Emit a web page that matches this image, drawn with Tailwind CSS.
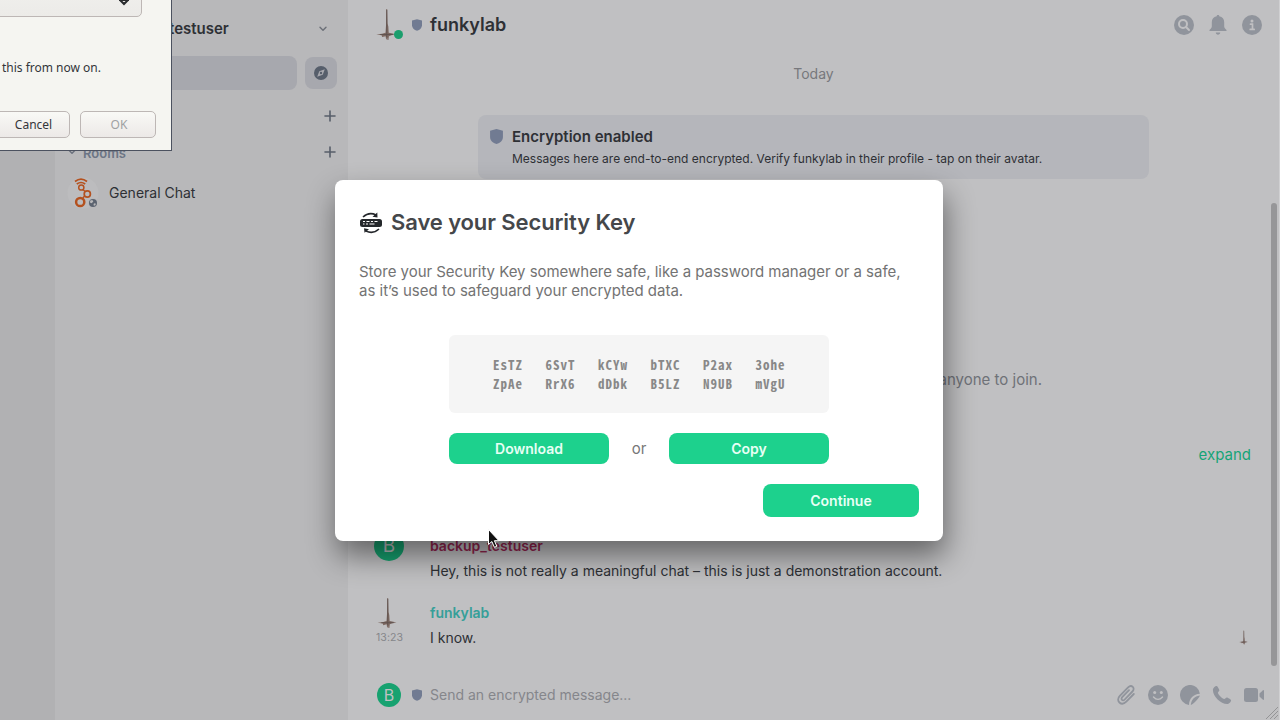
<!DOCTYPE html>
<html lang="en">
<head>
<meta charset="utf-8">
<title>Save your Security Key</title>
<script src="https://cdn.jsdelivr.net/npm/@tailwindcss/browser@4"></script>
</head>
<body class="font-['Inter',sans-serif]">
<svg class="hidden">
  <symbol id="shield" viewBox="0 0 12 14"><path d="M6 0 12 1.6V7.4C12 10.6 9.5 13 6 14 2.5 13 0 10.6 0 7.4V1.6Z" fill="currentColor"/></symbol>
  <symbol id="tower" viewBox="0 0 20 34"><path d="M10.300 1h.9L11.600 16 12.400 19 12.800 25.500 15.500 26 20 27 15.500 28 13 29 12.500 33H11.500L11.200 31 10.200 33 9.600 29 6 30 5.500 28.200 0 27.300 6 26.500 9.500 25.500 10 18Z" fill="#7c6861"/><path d="M10.800 2v28M4 27.300h13" stroke="#5d504d" stroke-width=".9"/></symbol>
  <symbol id="plus" viewBox="0 0 12 12"><path d="M6 1v10M1 6h10" stroke="currentColor" stroke-width="1.6" stroke-linecap="round"/></symbol>
  <symbol id="chevron" viewBox="0 0 8 6"><path d="M1 1.2 4 4.300 7 1.2" fill="none" stroke="currentColor" stroke-width="1.4" stroke-linecap="round" stroke-linejoin="round"/></symbol>
</svg>
<div class="relative flex h-[720px] w-[1280px] overflow-hidden bg-[#c0c0c2] text-[14px] text-[#2e3035]">
  <div class="w-[55px] shrink-0 bg-[#b1b1b3]"></div>
  <aside class="flex w-[293px] shrink-0 flex-col bg-[#b8b8ba]">
    <header class="flex h-[56px] items-center justify-between pt-px pr-[21px] pl-[53px]">
      <span class="w-[120px] pt-px text-right text-[15px] leading-5 font-semibold whitespace-nowrap">backup_testuser</span>
      <svg class="h-[6px] w-2 text-[#6c7078]"><use href="#chevron"/></svg>
    </header>
    <div class="flex h-[34px] gap-2 pr-[11px] pl-3">
      <div class="flex-1 rounded-lg bg-[#a7a8ae]"></div>
      <div class="mt-px flex size-8 items-center justify-center rounded-lg bg-[#a7a8ae]">
        <svg class="size-[14px]" viewBox="0 0 14 14"><circle cx="7" cy="7" r="7" fill="#565e6b"/><path d="M10.8 3.2 8.7 8.7 3.2 10.8 5.3 5.3Z" fill="#a7a8ae"/><circle cx="7" cy="7" r="1.2" fill="#565e6b"/></svg>
      </div>
    </div>
    <div class="mt-2 flex h-[36px] items-center justify-end pr-3 text-[#575e6a]"><svg class="size-3"><use href="#plus"/></svg></div>
    <div class="flex h-[36px] items-center pr-3 pl-[13px] text-[#575e6a]">
      <svg class="mr-[7px] h-[6px] w-2 text-[#6a707d]"><use href="#chevron"/></svg>
      <span class="mt-[3px] flex-1 text-[13px] font-semibold text-[#6c7585]">Rooms</span>
      <svg class="size-3"><use href="#plus"/></svg>
    </div>
    <div class="flex h-[46px] items-center gap-[10px] pl-3">
      <svg class="size-8" viewBox="0 0 32 32"><circle cx="16" cy="16" r="15.5" fill="#bcbcbe"/><g fill="none" stroke="#b4511f"><path d="M8 4.5Q14-.2 20 4.5M9.8 7Q14 4 18.2 7" stroke-width="1.7"/><circle cx="14.3" cy="10.5" r="2.6" stroke-width="1.5"/><circle cx="20.3" cy="17" r="3.1" stroke-width="1.7"/><circle cx="13.2" cy="25" r="4.1" stroke-width="2.5"/><path d="m16 12.5 2 2M17.7 19l-2 2" stroke-width="1.4"/></g><circle cx="26" cy="26" r="5" fill="#b8b8ba"/><circle cx="26" cy="26" r="4" fill="#5b6370"/><path d="m23.3 23.5 2-.6 1 1.6-1.6 1.8-1.8-.8ZM27 26.2l2 .5-1 2-1.6-.5Z" fill="#b8b8ba"/></svg>
      <span class="text-[14px] leading-5">General Chat</span>
    </div>
  </aside>

  <main class="flex min-w-0 flex-1 flex-col">
    <header class="flex h-[50px] shrink-0 items-center pr-[18px] pl-[28px]">
      <div class="relative mr-[9px] h-[34px] w-[27px]">
        <svg class="h-[33px] w-5"><use href="#tower"/></svg>
        <div class="absolute top-[22px] left-[18px] size-[9px] rounded-full bg-[#1b9e6d]"></div>
      </div>
      <svg class="mr-2 h-3 w-[10px] text-[#717b92]"><use href="#shield"/></svg>
      <h1 class="flex-1 text-[18px] leading-6 font-semibold">funkylab</h1>
      <div class="flex items-center gap-[14px] text-[#90949c]">
        <svg class="size-5" viewBox="0 0 20 20"><circle cx="10" cy="10" r="10" fill="currentColor"/><circle cx="9" cy="9" r="4" fill="none" stroke="#c0c0c2" stroke-width="2"/><path d="m12 12 3 3" stroke="#c0c0c2" stroke-width="2" stroke-linecap="round"/></svg>
        <svg class="size-5" viewBox="0 0 20 20" fill="currentColor"><path d="M10 0c-.8 0-1.3.6-1.3 1.2C5.5 1.8 3.8 4 3.8 7.2v4.2C3.8 13 2.3 14 1.5 15v1h17v-1c-.8-1-2.3-2-2.3-3.6V7.2C16.2 4 14.5 1.8 11.3 1.2 11.3.6 10.8 0 10 0ZM7.800 17.600h4.400c0 1.300-1 2.100-2.200 2.100s-2.200-.8-2.200-2.100Z"/></svg>
        <svg class="size-5" viewBox="0 0 20 20"><circle cx="10" cy="10" r="10" fill="currentColor"/><circle cx="10" cy="6" r="1.5" fill="#c0c0c2"/><path d="M8.5 9.2h2v5M8.2 14.4h4" fill="none" stroke="#c0c0c2" stroke-width="1.7" stroke-linecap="round"/></svg>
      </div>
    </header>
    <div class="flex h-[480px] shrink-0 flex-col pr-[29px] pl-[82px]">
      <div class="mt-[14px] ml-[48px] w-[671px] text-center leading-5 text-[#77787c]">Today</div>
      <section class="mt-[31px] ml-[48px] flex h-[64px] w-[671px] rounded-lg bg-[#b5b6bb] pl-3">
        <svg class="mt-[14px] mr-[9px] h-[15px] w-[13px] text-[#717b92]"><use href="#shield"/></svg>
        <div class="pt-3">
          <h2 class="text-[15px] leading-5 font-semibold">Encryption enabled</h2>
          <p class="pt-[3px] text-[12px] leading-[18px] whitespace-nowrap">Messages here are end-to-end encrypted. Verify funkylab in their profile - tap on their avatar.</p>
        </div>
      </section>
      <p class="mt-[191px] w-[612px] text-right text-[15px] leading-5 text-[#6f7278]">anyone to join.</p>
      <p class="mt-[55px] text-right text-[15px] leading-5 text-[#16a477]">expand</p>
    </div>
    <article class="flex h-[66px] shrink-0 pl-[26px]">
      <div class="mt-px mr-[26px] flex size-[30px] items-center justify-center rounded-full bg-[#17a270] text-[19px] text-[#c0c0c2]">B</div>
      <div class="pt-[6px]"><h3 class="leading-5 font-semibold text-[#93254f]">backup_testuser</h3><p class="mt-[5px] leading-5 whitespace-nowrap">Hey, this is not really a meaningful chat – this is just a demonstration account.</p></div>
    </article>
    <article class="flex h-[74px] shrink-0 pl-[26px]">
      <div class="mr-[26px] w-[30px]"><svg class="mt-[1px] ml-[3px] h-[32px] w-[20px]"><use href="#tower"/></svg><time class="mt-px ml-[2px] block text-[10.5px] leading-4 tracking-[.1px] whitespace-nowrap text-[#85868a]">13:23</time></div>
      <div class="flex-1 pt-[7px]"><h3 class="leading-5 font-semibold text-[#369f99]">funkylab</h3><p class="mt-[5px] leading-5">I know.</p></div>
      <svg class="mt-[34px] mr-[32px] h-[15px] w-[9px]"><use href="#tower"/></svg>
    </article>
    <footer class="flex h-[50px] items-center pr-[16px] pl-[29px]">
      <div class="mr-[11px] flex size-6 items-center justify-center rounded-full bg-[#17a270] text-[16px] text-[#c0c0c2]">B</div>
      <svg class="mr-2 h-3 w-[10px] text-[#717b92]"><use href="#shield"/></svg>
      <span class="flex-1 leading-5 text-[#85868b]">Send an encrypted message...</span>
      <div class="flex gap-3 text-[#90949c]">
        <svg class="size-5" viewBox="0 0 20 20" fill="none"><path d="m17.8 9-7.5 7.7c-5 5-11.2-1-6.5-5.8l8.3-8.5c3.4-3.4 7.6.7 4.3 4.1l-7.7 8c-2 2-4.4-.3-2.5-2.3l6.8-7" stroke="currentColor" stroke-width="1.8" stroke-linecap="round"/></svg>
        <svg class="size-5" viewBox="0 0 20 20"><circle cx="10" cy="10" r="10" fill="currentColor"/><g fill="#c0c0c2"><circle cx="6.7" cy="7.4" r="1.5"/><circle cx="13.3" cy="7.4" r="1.5"/></g><path d="M5.500 12Q10 16.8 14.5 12" fill="none" stroke="#c0c0c2" stroke-width="1.4" stroke-linecap="round"/></svg>
        <svg class="size-5" viewBox="0 0 20 20" fill="currentColor"><path d="M9 19.9A10 10 0 1 1 19.9 8.7C13.5 9 9.200 13.200 9 19.900ZM10.800 20C11.200 14.800 14.300 11.200 19.900 10.500 19.500 12.500 13.500 19.300 10.800 20Z"/></svg>
        <svg class="size-5" viewBox="0 0 20 20"><path d="M4.700.9c.8 0 2.700 3.600 2.700 4.300 0 .9-1.600 1.700-1.500 2.600.2 1.700 4.600 6.100 6.300 6.300.9.100 1.700-1.500 2.600-1.500.7 0 4.300 1.900 4.300 2.700 0 1.700-2.200 3.800-4 3.800C8.800 19.100.9 11.200.9 4.900c0-1.800 2.100-4 3.800-4Z" fill="currentColor"/></svg>
        <svg class="size-5" viewBox="0 0 20 20" fill="currentColor"><rect y="3" width="14" height="14" rx="2.500"/><path d="M15.500 8.500 18.700 5.500Q20 4.500 20 6v8q0 1.500-1.300.5l-3.200-3Z"/></svg>
      </div>
    </footer>
  </main>

  <div class="absolute top-[203px] left-[1271px] h-[463px] w-[6px] rounded-full bg-[#969698]"></div>
  <div class="absolute top-0 right-0 h-full w-px bg-[#d0d0d2]"></div>
  <svg class="absolute right-[2px] bottom-[1px] size-3" viewBox="0 0 12 12"><path d="m0 12 12-12M4 12l8-8M8 12l4-4" stroke="#949496" stroke-width="1"/></svg>

  <div role="dialog" class="absolute top-[180px] left-[335px] flex h-[361px] w-[608px] flex-col rounded-lg bg-white px-6 shadow-[2px_15px_30px_0_rgba(0,0,0,0.48)]">
    <div class="flex h-[84px] items-center gap-[8px]">
      <svg class="mt-[2px] size-6" viewBox="0 0 24 24" fill="none"><rect x="1" y="8" width="22" height="8" rx="2.500" fill="#24272b"/><path d="M4 6Q10 .5 17 4M20 18Q14 23.500 7 20" stroke="#24272b" stroke-width="1.600"/><path d="m18.300 1.500.2 5-5-.8ZM5 17.300l5 1-4.500 3.500Z" fill="#24272b"/><path d="M4 10.500h2M7.500 10.500h3M12 10.500h2M15.500 10.500h3M4 13h1.500M7 13h2M10.500 13h5" stroke="#fff" stroke-width="1.200"/></svg>
      <h2 class="text-[22px] leading-7 font-semibold tracking-[-.1px] whitespace-nowrap text-[#45474a]">Save your Security Key</h2>
    </div>
    <p class="h-[71px] text-[15px] leading-[19px] tracking-[-.03px] whitespace-nowrap text-[#737373]"><span class="block -translate-y-[2px]">Store your Security Key somewhere safe, like a password manager or a safe,</span><span class="block -translate-y-[2px] tracking-normal">as it’s used to safeguard your encrypted data.</span></p>
    <div class="flex h-[78px] w-[380px] shrink-0 flex-col justify-center self-center rounded-md bg-[#f5f5f5] pl-[44px] font-['Noto_Sans_Mono_CJK_SC','Liberation_Mono',monospace] text-[13px] leading-[19px] font-bold tracking-[1px] whitespace-pre text-[#888]"><div>EsTZ   6SvT   kCYw   bTXC   P2ax   3ohe</div><div>ZpAe   RrX6   dDbk   B5LZ   N9UB   mVgU</div></div>
    <div class="mt-[20px] flex h-[31px] w-[380px] shrink-0 items-center justify-between self-center font-semibold text-[#e8fff5]">
      <button class="h-[31px] w-[160px] rounded-lg bg-[#1dd18d] text-[14px]">Download</button>
      <span class="pt-px text-[15px] font-normal text-[#777]">or</span>
      <button class="h-[31px] w-[160px] rounded-lg bg-[#1dd18d] text-[14px]">Copy</button>
    </div>
    <button class="mt-5 h-[33px] w-[156px] shrink-0 self-end rounded-lg bg-[#1dd18d] text-[14px] font-semibold text-[#e8fff5]">Continue</button>
  </div>

  <div class="absolute top-[-60px] left-[-200px] flex h-[211px] w-[372px] flex-col border border-[#4c5260] bg-[#f5f5f1] font-['Noto_Sans',sans-serif] text-[12px] text-[#33363a]">
    <div class="ml-4 flex h-[76px] w-[325px] items-end justify-end rounded-[5px] border border-[#bdb7b5] bg-linear-to-b from-[#f7f7f5] to-[#ecebe8] pr-[11px] pb-[10px]">
      <svg class="h-[10px] w-3" viewBox="0 0 12 10"><path d="M1 4h10M2 4l4 4 4-4" fill="none" stroke="#292b2e" stroke-width="2"/></svg>
    </div>
    <p class="mt-[42px] pr-[70px] text-right leading-[18px]">this from now on.</p>
    <div class="mt-[34px] flex justify-end gap-[10px] pr-[15px]">
      <button class="h-[27px] w-[76px] rounded-[5px] border border-[#bdb7b5] bg-linear-to-b from-[#f9f9f6] to-[#ece9e7] pl-[3px]">Cancel</button>
      <button class="h-[27px] w-[76px] rounded-[5px] border border-[#bdb7b5] bg-linear-to-b from-[#f9f9f6] to-[#ece9e7] pl-[2px] text-[#a0a1a3]">OK</button>
    </div>
  </div>
  <svg class="absolute top-[528px] left-[487px] h-[21px] w-[13px]" viewBox="0 0 13 21"><path d="M1.500 1.500v15l3.400-3 2.500 5.800 2.400-1-2.400-5.600h4.500Z" fill="#111" stroke="#fff" stroke-width="1"/></svg>
</div>
</body>
</html>
